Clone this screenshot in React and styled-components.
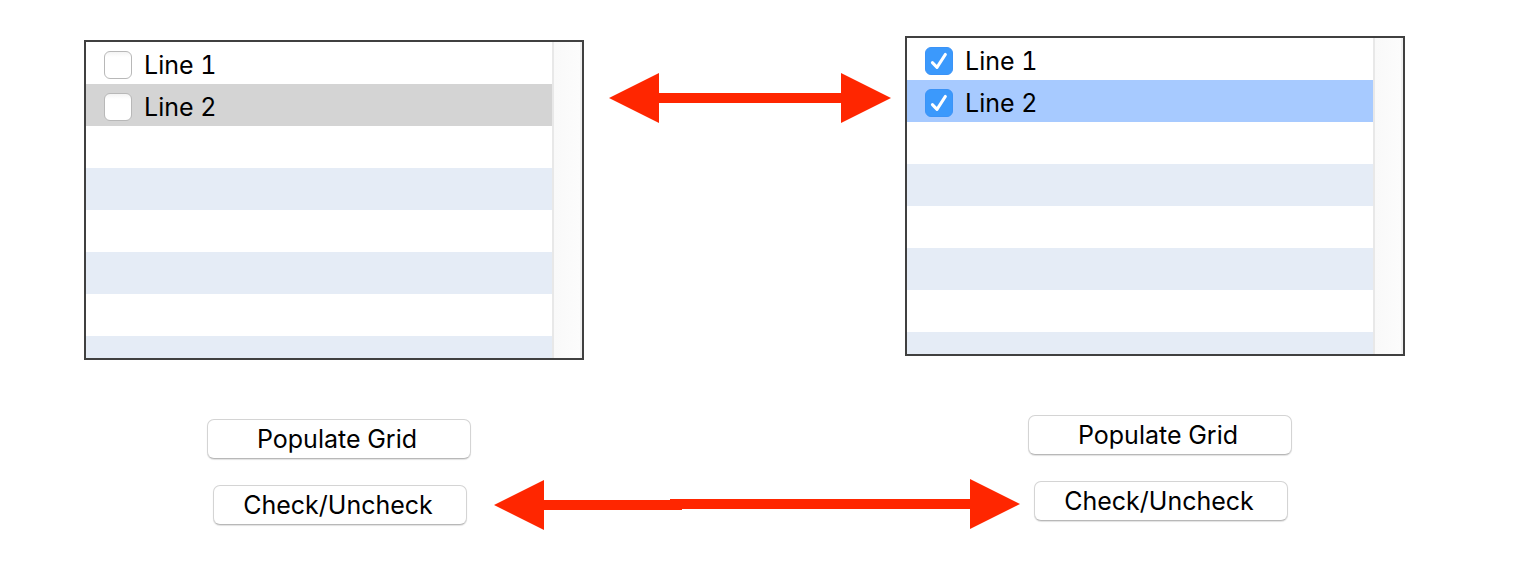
import React, { useState } from "react";
import styled, { createGlobalStyle } from "styled-components";

const GlobalStyle = createGlobalStyle`
  *, *::before, *::after { box-sizing: border-box; }
  body {
    margin: 0;
    background: #fff;
    color: #000;
    font-family: Inter, "Liberation Sans", sans-serif;
    font-size: 25px;
    font-variant-numeric: tabular-nums;
    line-height: 32px;
  }
`;

const Page = styled.main`
  display: grid;
  grid-template-columns: 500fr 321fr 500fr;
  align-items: start;
  padding: 36px 135px 32px 84px;
`;

const Panel = styled.section`
  grid-row: 1;
  grid-column: ${(p) => p.$column};
  padding-top: ${(p) => (p.$lowered ? 4 : 0)}px;
`;

const ListBox = styled.div`
  display: flex;
  height: 320px;
  overflow: hidden;
  border: 2px solid #404040;
`;

const Rows = styled.ul`
  flex: 1;
  margin: 0;
  padding: 0;
  list-style: none;
`;

const Row = styled.li`
  height: 42px;
  padding: 4px 18px 0;
  background: #fff;

  &:nth-child(even) {
    background: ${(p) => p.$highlight || "#e5ecf6"};
  }
`;

const RowLabel = styled.label`
  display: flex;
  align-items: center;
  gap: 12px;
  height: 38px;
`;

const CheckBox = styled.span`
  display: grid;
  width: 28px;
  height: 28px;

  & > * {
    grid-area: 1 / 1;
  }
`;

const CheckInput = styled.input`
  appearance: none;
  width: 28px;
  height: 28px;
  margin: 0;
  border: 1px solid #b8b8b8;
  border-radius: 6px;
  background: linear-gradient(#f4f4f4, #fff 5px);

  &:checked {
    border-color: #3b93f7;
    background: #3b99fc;
  }
`;

const Tick = styled.svg`
  width: 28px;
  height: 28px;
  pointer-events: none;
`;

const ScrollTrack = styled.div`
  width: 30px;
  border: solid #e8e8e8;
  border-width: 0 2px;
  border-right-color: #f0f0f0;
  background: linear-gradient(90deg, #f9f9f9, #fcfcfc);
`;

const Buttons = styled.div`
  display: flex;
  flex-direction: column;
  align-items: flex-start;
  gap: 26px;
  padding: 59px 0 0 123px;
`;

const PushButton = styled.button`
  width: ${(p) => (p.$narrow ? 254 : 264)}px;
  height: 40px;
  margin: 0 ${(p) => (p.$narrow ? 6 : 0)}px;
  padding: 0 4px 0 0;
  border: 1px solid #d4d4d4;
  border-bottom-color: #b8b8b8;
  border-radius: 7px;
  background: #fff;
  box-shadow: 0 1px 1px #e2e2e2;
  color: inherit;
  font: inherit;
  white-space: nowrap;
`;

const Arrow = styled.svg`
  display: block;
  grid-row: 1;
  fill: #ff2600;
  pointer-events: none;
  justify-self: stretch;
`;

const ListArrow = styled(Arrow)`
  grid-column: 2;
  margin: 37px 14px 0 25px;
`;

const ButtonArrow = styled(Arrow)`
  grid-column: 1 / -1;
  margin: 443px 385px 0 410px;
`;

const EMPTY_ROWS = [3, 4, 5, 6, 7, 8];

function Sample({ column, lowered, initial, highlight }) {
  const [checked, setChecked] = useState([initial, initial]);
  const toggle = (i) =>
    setChecked(checked.map((value, n) => (n === i ? !value : value)));
  const toggleAll = () => setChecked(checked.map((value) => !value));

  return (
    <Panel $column={column} $lowered={lowered}>
      <ListBox>
        <Rows>
          {checked.map((value, i) => (
            <Row key={i} $highlight={highlight}>
              <RowLabel>
                <CheckBox>
                  <CheckInput
                    type="checkbox"
                    checked={value}
                    onChange={() => toggle(i)}
                  />
                  {value && (
                    <Tick viewBox="0 0 28 28" aria-hidden="true">
                      <path
                        d="M7.4 15.6 L12 20.4 L20.4 7.4"
                        fill="none"
                        stroke="#fff"
                        strokeWidth="3"
                        strokeLinecap="round"
                        strokeLinejoin="round"
                      />
                    </Tick>
                  )}
                </CheckBox>
                {`Line ${i + 1}`}
              </RowLabel>
            </Row>
          ))}
          {EMPTY_ROWS.map((n) => (
            <Row key={n} aria-hidden="true" />
          ))}
        </Rows>
        <ScrollTrack />
      </ListBox>
      <Buttons>
        <PushButton type="button" onClick={() => setChecked([false, false])}>
          Populate Grid
        </PushButton>
        <PushButton type="button" $narrow onClick={toggleAll}>
          Check/Uncheck
        </PushButton>
      </Buttons>
    </Panel>
  );
}

export default function App() {
  return (
    <>
      <GlobalStyle />
      <Page>
        <Sample column={1} lowered initial={false} highlight="#d4d4d4" />
        <Sample column={3} initial highlight="#a7caff" />
        <ListArrow viewBox="0 0 282 50" aria-hidden="true">
          <path d="M0 25 L50 0 V20 H232 V0 L282 25 L232 50 V30 H50 V50 Z" />
        </ListArrow>
        <ButtonArrow viewBox="0 0 526 51" aria-hidden="true">
          <path d="M0 26 L50 1 V21 H176 V20 H476 V0 L526 25 L476 50 V30 H188 V31 H50 V51 Z" />
        </ButtonArrow>
      </Page>
    </>
  );
}
